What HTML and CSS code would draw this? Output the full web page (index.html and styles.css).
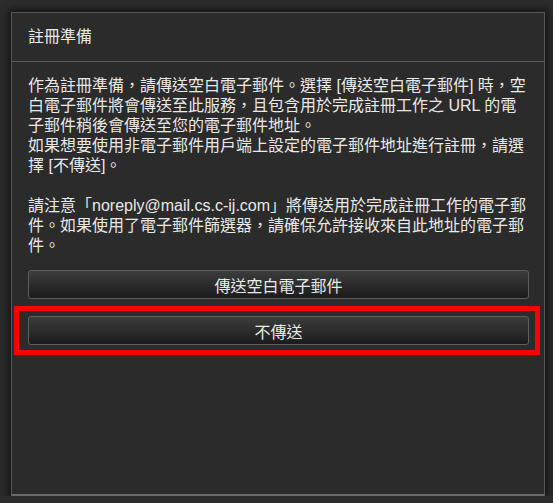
FILE: index.html
```html
<!DOCTYPE html>
<html lang="zh-Hant">
<head>
    <meta charset="UTF-8">
    <meta name="viewport" content="width=device-width, initial-scale=1.0">
    <title>註冊準備</title>
    <link rel="stylesheet" href="styles.css">
</head>
<body>
    <div class="dialog">
        <div class="dialog-header">註冊準備</div>

        <div class="dialog-body">
            <p>作為註冊準備，請傳送空白電子郵件。選擇 [傳送空白電子郵件] 時，空白電子郵件將會傳送至此服務，且包含用於完成註冊工作之 URL 的電子郵件稍後會傳送至您的電子郵件地址。<br>如果想要使用非電子郵件用戶端上設定的電子郵件地址進行註冊，請選擇 [不傳送]。</p>
            <p>請注意「noreply@mail.cs.c-ij.com」將傳送用於完成註冊工作的電子郵件。如果使用了電子郵件篩選器，請確保允許接收來自此地址的電子郵件。</p>

            <div class="actions">
                <button class="action-button">傳送空白電子郵件</button>
                <div class="highlight-wrap">
                    <button class="action-button">不傳送</button>
                    <!-- annotation frame -->
                    <div class="highlight"></div>
                </div>
            </div>
        </div>
    </div>
</body>
</html>
```

FILE: styles.css
```css
:root {
    --page: #2c2c2c;
    --panel: #2b2b2b;
    --line: #565656;
    --text: #e9e9e9;
}

body {
    background-color: var(--page);
    font-family: "Liberation Sans", "Noto Sans CJK TC", sans-serif;
    margin: 0;
    padding: 12px 0 0 11px;
    color: var(--text);
}

.dialog {
    box-sizing: border-box;
    width: 534px;
    height: 484px;
    background-color: var(--panel);
    border: 1px solid var(--line);
    border-bottom: 2px solid #6a6a6a;
    box-shadow: 0 0 8px 3px rgba(0, 0, 0, 0.55);
}

.dialog-header {
    font-size: 16px;
    line-height: 20px;
    padding: 14px 16px 14px;
    border-bottom: 1px solid #5a5a5a;
}

.dialog-body {
    padding: 14px 15px 0 16px;
    font-size: 16px;
    line-height: 20px;
}

.dialog-body p {
    margin: 0 0 20px;
}

.actions {
    display: flex;
    flex-direction: column;
    gap: 17px;
    margin-top: -6px;
}

.action-button {
    display: block;
    width: 100%;
    height: 29px;
    border: 1px solid #5e5e5e;
    border-radius: 3px;
    background: linear-gradient(to bottom, #3c3c3c, #1b1b1b);
    color: var(--text);
    font-family: inherit;
    font-size: 16px;
    padding: 0;
    cursor: pointer;
}

.highlight-wrap {
    position: relative;
}

.highlight {
    position: absolute;
    top: -10px;
    left: -14px;
    right: -11px;
    bottom: -10px;
    border: 5px solid #ff0000;
    pointer-events: none;
}
```
